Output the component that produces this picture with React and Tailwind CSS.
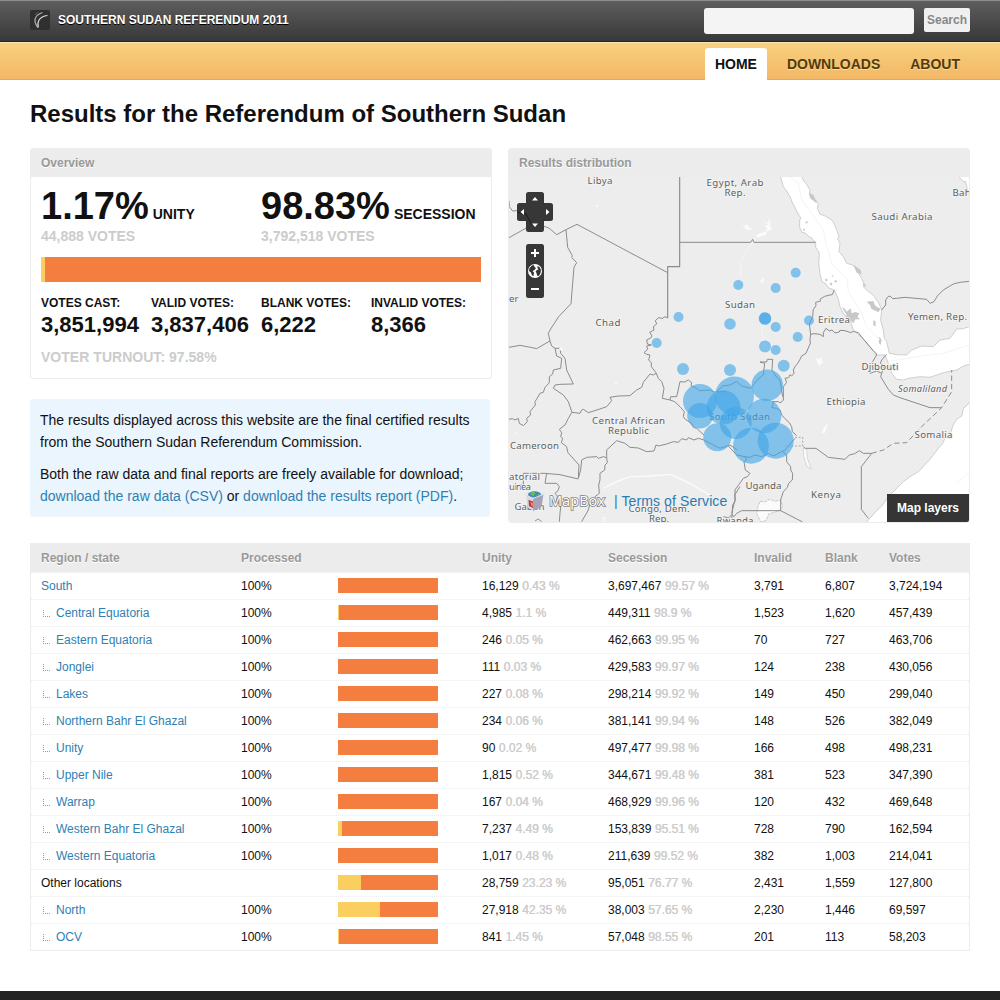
const stats = [
  ['VOTES CAST:', '3,851,994'],
  ['VALID VOTES:', '3,837,406'],
  ['BLANK VOTES:', '6,222'],
  ['INVALID VOTES:', '8,366'],
];

// name, level, processed, unity, unity %, secession, secession %, invalid, blank, votes, bar width of unity
const rows = [
  ['South', 0, '100%', '16,129', '0.43 %', '3,697,467', '99.57 %', '3,791', '6,807', '3,724,194', 0],
  ['Central Equatoria', 1, '100%', '4,985', '1.1 %', '449,311', '98.9 %', '1,523', '1,620', '457,439', 1],
  ['Eastern Equatoria', 1, '100%', '246', '0.05 %', '462,663', '99.95 %', '70', '727', '463,706', 0],
  ['Jonglei', 1, '100%', '111', '0.03 %', '429,583', '99.97 %', '124', '238', '430,056', 0],
  ['Lakes', 1, '100%', '227', '0.08 %', '298,214', '99.92 %', '149', '450', '299,040', 0],
  ['Northern Bahr El Ghazal', 1, '100%', '234', '0.06 %', '381,141', '99.94 %', '148', '526', '382,049', 0],
  ['Unity', 1, '100%', '90', '0.02 %', '497,477', '99.98 %', '166', '498', '498,231', 0],
  ['Upper Nile', 1, '100%', '1,815', '0.52 %', '344,671', '99.48 %', '381', '523', '347,390', 0],
  ['Warrap', 1, '100%', '167', '0.04 %', '468,929', '99.96 %', '120', '432', '469,648', 0],
  ['Western Bahr El Ghazal', 1, '100%', '7,237', '4.49 %', '153,839', '95.51 %', '728', '790', '162,594', 4],
  ['Western Equatoria', 1, '100%', '1,017', '0.48 %', '211,639', '99.52 %', '382', '1,003', '214,041', 0],
  ['Other locations', 0, '', '28,759', '23.23 %', '95,051', '76.77 %', '2,431', '1,559', '127,800', 23],
  ['North', 1, '100%', '27,918', '42.35 %', '38,003', '57.65 %', '2,230', '1,446', '69,597', 42],
  ['OCV', 1, '100%', '841', '1.45 %', '57,048', '98.55 %', '201', '113', '58,203', 1],
];

const cols = 'grid grid-cols-[200px_97px_144px_126px_146px_71px_64px_81px] pl-[10px]';

const circles = [
  [678.5, 317, 5], [738.3, 285, 5], [795.7, 272.7, 5], [775.7, 288, 5], [765, 318.5, 6], [765, 318.5, 6.3],
  [775.7, 327, 5], [730, 324, 5.8], [809, 320.5, 5], [797.7, 337, 5], [656.7, 343, 5], [683, 369, 6],
  [730, 370, 6], [765, 346.4, 6], [775.7, 350, 5], [783.7, 365.7, 6],
  [700, 401, 17], [700, 415.7, 12.8], [717.3, 437.3, 14], [767.3, 385.2, 15.8], [734.5, 396, 19.5],
  [723.5, 407.5, 17], [764, 416, 17.3], [735.7, 423, 16], [751, 445.7, 18], [775.7, 440.7, 18],
];

// text, x (centre), y (baseline), width
const labels = [
  ['Libya', 600, 183.5, 25], ['Egypt, Arab', 735, 185.5, 57], ['Rep.', 735, 195.5, 21], ['Saudi Arabia', 902, 220, 61],
  ['Sudan', 740, 307.5, 30], ['Chad', 608, 326, 25], ['Eritrea', 834, 322.5, 32], ['Yemen, Rep.', 937.5, 319.5, 59],
  ['Djibouti', 880, 369.5, 37], ['Ethiopia', 846, 405, 39], ['Somalia', 933.5, 437.5, 38],
  ['Central African', 628.5, 423.5, 73], ['Republic', 628.5, 433.5, 41], ['Cameroon', 534.5, 448.5, 49],
  ['South Sudan', 739.5, 420, 61], ['Uganda', 763.5, 489, 36], ['Kenya', 826, 497.5, 30], ['Gabon', 529.5, 510, 30],
  ['Congo, Dem.', 659, 512, 61], ['Rep.', 659, 521.5, 20], ['Rwanda', 735, 524, 37],
];

function ResultsMap() {
  return (
    <svg className="block" width="460" height="345" viewBox="509 177 460 345">
      <rect x="509" y="177" width="460" height="345" fill="#ededed" />
      {/* seas */}
      <g transform="translate(730 140) scale(.33333)" fill="#fff" stroke="#c4c4c4" strokeWidth="2.4" strokeLinejoin="round">
        <path d="M150 105L160 140 170 153 180 170 188 190 195 203 206 224 213 235 209 240 209 262 216 277 228 280 236 290 244 293 250 302 257 305 257 322 266 335 268 345 266 370 270 400 275 424 288 432 296 444 313 450 325 478 330 500 340 520 352 533 362 545 370 570 400 597 425 628 440 645 465 645 475 670 485 700 500 718 520 720 535 715 570 710 600 712 640 698 680 690 700 678 717 673 730 670 730 555 700 566 680 567 660 595 630 600 610 620 575 618 545 630 530 645 500 644 478 640 470 605 463 595 460 570 452 540 455 510 447 490 430 465 412 452 400 440 402 430 392 410 385 400 380 385 365 374 350 370 340 350 327 335 330 310 323 295 327 290 322 275 312 250 305 240 285 228 270 222 262 205 265 190 252 178 238 165 240 150 228 130 222 125 213 105Z" />
        <path d="M725 775L712 795 700 805 696 827 680 838 668 857 664 875 645 895 638 910 625 925 600 958 565 995 540 1010 520 1025 480 1065 455 1098 440 1112 410 1146 400 1160 725 1160Z" />
        <path d="M683 105L690 114 700 125 706 124 710 138 714 155 725 150 725 105Z" />
        <g stroke="none" fill="#c8c8c8">
          <path d="M238 158L250 165 256 178 262 185 258 188 250 182 240 174ZM370 374L392 390 395 404 386 400 380 398ZM336 502L345 506 350 515 362 505 365 520 376 516 388 520 382 530 390 538 376 538 370 550 362 542 344 535 350 526ZM410 485L430 483 434 494 440 500 452 506 445 517 432 510 425 508 420 495ZM430 540L437 545 436 560 430 555ZM446 590L455 598 452 615 447 610ZM396 430L408 434 406 442Z" />
          <circle cx="230" cy="247" r="3.500" /><circle cx="289" cy="420" r="3.500" /><circle cx="308" cy="408" r="2.500" /><circle cx="317" cy="424" r="3.500" /><circle cx="303" cy="432" r="3.500" /><circle cx="222" cy="269" r="3" />
        </g>
        <g fill="none" stroke="#f3f3f3" strokeWidth="3">
          <path d="M178 110L205 130 215 180 280 270 288 310 305 370 352 420 355 455 395 520 410 560 450 600" />
          <path d="M475 665L560 650 640 640 717 615" />
          <path d="M680 1030L725 990" />
        </g>
        {/* lakes and rivers */}
        <g stroke="none" fill="#fbfbfb">
          <path d="M36 253L44 258 52 254 56 262 70 268 50 270ZM76 288L90 280 106 276 112 266 104 258 114 254 100 244 114 249 118 234 122 262 125 270 112 272 108 284 86 292ZM88 425L105 410 98 428ZM258 654L268 658 275 652 278 668 266 678ZM275 878L282 862 294 850 284 880ZM336 795L348 796 340 810Z" />
          <path d="M90 1084L104 1086 120 1078 136 1084 152 1080 158 1100 148 1112 116 1122 108 1142 92 1145 80 1120 84 1100Z" stroke="#c8c8c8" strokeWidth="3" strokeDasharray="9 3" />
          <path d="M220 925L230 928 232 955 244 988 230 978 221 948Z" stroke="#c8c8c8" strokeWidth="2" />
        </g>
        <g fill="none" stroke="#f7f7f7" strokeWidth="2.500">
          <path d="M80 290L45 340 32 365 33 410" />
          <path d="M108 540L95 570 102 615 108 650" />
          <path d="M-380 1045L-340 1025-300 1010-240 1008-180 1003-130 1025-60 1065" stroke="#fbfbfb" strokeWidth="4" />
        </g>
        {/* eastern borders */}
        <g fill="none" stroke="#8c8c8c" strokeWidth="3" strokeLinejoin="round">
          <path d="M-151 307H62L68 298 72 307H256" />
          <path d="M455 510L467 495 467 480 474 470 480 468 488 476 500 475 525 472 590 478 600 490 612 485 622 468 640 450 670 432 690 427 717 424" />
          <path d="M313 450L307 464 300 465 284 469 270 478 272 483 257 487 258 497 250 508 248 530 238 552 242 583 240 598 241 610 228 640 215 648 209 660 203 670 195 680 190 690 192 700 185 708 180 704 176 713 165 715 170 727 160 740 160 780 156 785 150 788 145 785 128 785 130 792 125 803 140 805 150 810 156 826 165 836 178 848 185 860 187 875 200 887" />
          <path d="M242 583L252 581 270 583 280 590 280 578 288 565 298 573 306 570 315 579 328 576 330 571 345 572 362 578 370 574 385 578 400 597 430 632 440 642 437 650 425 670 420 700 440 693 455 700 462 680 451 670 455 660 470 643" />
          <path d="M455 700L452 710 475 748 490 765 510 773 600 803 635 803" />
          <path d="M220 920L226 925 258 925 295 952 345 958 358 945 374 941 388 932 400 940 425 940 394 980V1108L415 1135" />
          <path d="M158 935L170 945 170 965 182 980 182 990 188 1000 187 1020 176 1030 172 1042 160 1055 152 1080 152 1112 218 1146" />
          <path d="M-20 1130L-4 1134 5 1124 12 1130 20 1120 35 1112H152" />
          <path d="M45 950L50 960 42 965 46 990 60 1000 52 1010 40 1015 15 1050 15 1080 5 1120" />
          <path d="M-5 918L20 945 45 950 60 952 75 945 95 950 115 940 130 948 165 930 195 895" />
          <path d="M-40 755L-22 738 0 735 20 724 35 738 62 745 80 722 100 704 104 670 90 666 110 666 112 658 128 658 126 690 140 712 150 720 158 770" />
          <path strokeDasharray="16 9" d="M425 940L460 930 490 910 530 908 575 860 635 803 665 755V690" />
          <path strokeDasharray="6 5" stroke="#aaa" d="M195 892H218V918H165" />
        </g>
      </g>
      {/* western borders */}
      <g transform="translate(500 140) scale(.33333)" fill="none" stroke="#8c8c8c" strokeWidth="3" strokeLinejoin="round">
        <path d="M27 183L28 200 38 213 50 212 78 220 95 255 115 256 130 258 148 265 170 284 198 269 231 253 503 398" />
        <path d="M27 293L95 255" />
        <path strokeWidth="3.500" d="M539 105V380H503V534" />
        <path d="M198 269L203 322 217 347 215 352 230 368 222 382 213 491 176 530 152 567 145 580 150 603" />
        <path d="M503 534L495 530 488 535 475 533 466 542 470 552 460 560 462 570 449 577 456 588 452 594 440 600 442 612 454 615 440 618 443 628 432 638 440 643 450 645 446 660 454 668 454 680 468 698 475 715 485 725 492 745 487 775 510 780 524 785 540 800 553 815 550 830 556 838 575 850 580 862 590 865 612 885" />
        <path d="M27 622L60 616 92 622 110 626 150 603 155 618 165 625 180 625 182 640 195 655 200 690 220 732 180 733 165 735 160 745 190 765 205 785 216 817" />
        <path d="M165 625L170 648 185 655 182 685 160 690 158 702 148 710 148 728 135 742 130 757 120 760 112 774 105 785 106 795 90 815 92 825 80 835 82 845 70 857 58 850 55 835 45 840 37 836 27 838" />
        <path d="M216 817L240 820 245 810 250 808 265 818 300 807 320 800 335 782 330 772 355 768 390 767 410 750 425 742 430 727 450 702 460 705 468 700" />
        <path d="M216 817L205 835 195 855 178 868 185 878 182 890 188 895 184 908 200 920 202 930 204 938 237 975 235 1015 242 990 245 960 260 952 290 950 295 955 310 950 320 953 320 930 350 902 375 910 390 922 415 924 440 935 462 933 468 915 475 918 500 912 520 905 535 907 545 896 560 900 565 893 582 900 595 895 612 900 640 915 660 925 690 915 712 930" />
        <path d="M320 953L322 968 315 975 314 990 300 1000 300 1020 296 1035 298 1060 285 1070 285 1085 270 1090 265 1110 245 1145" />
        <path d="M70 1000H135L180 1004 235 1017M70 1000V1035H40M140 1000L135 1030 170 1030 178 1040 174 1052 165 1060 172 1068 170 1080 182 1100 180 1120 178 1145M105 1143L115 1137 125 1145" />
        <path d="M510 780L512 770 530 770 540 725 555 726 565 720 575 728 573 738 590 745 598 752 630 750 640 756 680 755M695 1145L698 1095 706 1082 704 1065 720 1040" />
      </g>
      <g fill="#fafafa"><ellipse cx="561" cy="349" rx="2" ry="1.500" /><circle cx="597" cy="206" r="1" /><circle cx="616" cy="383" r="1" /><path d="M514 434L517 431 516 434ZM540 426l2-1v1.500ZM601 519l2-1v-2h1v2h2v1h-2v3h-1v-3Z" /></g>
      <g fontFamily="'Noto Sans'" fontSize="9.700" fill="#5f5f5f" stroke="#f2f2f2" strokeWidth="2" paintOrder="stroke">
        {labels.map(([t, x, y, w], i) => (
          <text key={i} x={x - w / 2} y={y} textLength={w}>{t}</text>
        ))}
        <text x="952.500" y="196" letterSpacing=".3">Bah</text>
        <text x="509" y="301.500">er</text>
        <text x="509" y="480" textLength="31">atorial</text>
        <text x="509" y="490" textLength="22">uinea</text>
        <text x="898" y="391.500" textLength="49" fontStyle="italic" fontSize="9.200">Somaliland</text>
      </g>
      <g fill="#40a7e8" fillOpacity=".62">
        {circles.map(([x, y, r], i) => <circle key={i} cx={x} cy={y} r={r} />)}
      </g>
      {/* pan and zoom controls */}
      <g fill="#373737">
        <path d="M528.500 192h13a2.500 2.500 0 0 1 2.500 2.500v8.500h6.500a2.500 2.500 0 0 1 2.500 2.500v13a2.500 2.500 0 0 1-2.500 2.500h-6.500v8.500a2.500 2.500 0 0 1-2.500 2.500h-13a2.500 2.500 0 0 1-2.500-2.500v-8.500h-6.500a2.500 2.500 0 0 1-2.500-2.500v-13a2.500 2.500 0 0 1 2.500-2.500h6.500v-8.500a2.500 2.500 0 0 1 2.500-2.500Z" />
        <rect x="526" y="244" width="18" height="54" rx="2.500" />
        <path d="M517 212L526 214 532 225" fill="none" stroke="#1c1c1c" />
      </g>
      <g fill="#fff">
        <path d="M532 200.500L535 197 538 200.500ZM532 223.500L535 227 538 223.500ZM524 209L520.500 212 524 215ZM546 209L549.500 212 546 215Z" />
        <path d="M531 252h3v-3h2v3h3v2h-3v3h-2v-3h-3ZM531 288h8v2h-8Z" />
        <circle cx="535" cy="271" r="7" />
      </g>
      <path fill="#333" d="M529.500 268L532 265.500 534 265 534.500 267 536 268 534.500 270 532.500 271 534 272.500 533.500 276 532 275.500 531 272.500 529 271ZM537.500 266L539.500 267 541 270 540.500 273 539 276 537 275.500 536.500 273 535.500 271.500 537 270 538.500 269.500 537.500 268Z" />
      {/* MapBox box logo */}
      <path d="M526 494L533 498 533 511 527.500 507Z" fill="#d9d6e2" />
      <path d="M533 498L543.500 494 541.500 507 533 511Z" fill="#a6a3b8" />
      <path d="M528.500 500L533 501.500 533 508 529 506Z" fill="#c3352f" />
      <path d="M530 502.500L531.500 503 531.500 505.500M532.300 502.500v4" fill="none" stroke="#f0c8c8" strokeWidth=".6" />
      <ellipse cx="534.500" cy="494.500" rx="6.500" ry="3.300" fill="#3d8fb8" />
      <path d="M530 493L533 491.500 535.500 493 533 496.500ZM536.500 496L540 493 539.500 496Z" fill="#76b947" />
      <path d="M524 495L529 491.500M540 491.500L544.500 494 533 498.500 525 494.500" fill="none" stroke="#e6e5ee" />
      <text x="549" y="506" textLength="56" fontFamily="'Open Sans'" fontSize="14.500" fill="#fff" stroke="#808080" strokeWidth="1.600" paintOrder="stroke">MapBox</text>
    </svg>
  );
}

export default function App() {
  return (
    <div className="flex h-[1000px] w-[1000px] flex-col overflow-hidden bg-white font-['Liberation_Sans',Arial,sans-serif] text-[#111]">
      <header className="flex h-[42px] shrink-0 items-start border-t border-b border-t-[#8c8c8c] border-b-[#222] bg-linear-to-b from-[#5e5e5e] to-[#383838] px-[30px]">
        <div className="mt-[9px] size-5 rounded-[2px] bg-[#303030]">
          <svg width="20" height="20" viewBox="0 0 20 20" fill="none">
            <path d="M8.300 17.500C7 12.500 8.500 6.500 17.500 5.500" stroke="#ddd" strokeWidth="1.100" />
            <path d="M8 17.500C3 11.500 4 5.500 12.500 2.500" stroke="#aaa" strokeWidth="1.300" />
            <path d="M5.500 5C6 3.500 7 2.500 8 1.500" stroke="#666" strokeWidth=".8" />
          </svg>
        </div>
        <div className="ml-2 mt-[10px] text-xs/[18px] font-bold text-white [text-shadow:0_1px_0_#000]">SOUTHERN SUDAN REFERENDUM 2011</div>
        <div className="ml-auto mt-[7px] h-[26px] w-[210px] rounded-[3px] bg-[#f4f4f4]" />
        <button className="ml-[10px] mt-[7px] h-6 w-[46px] rounded-[2px] bg-[#f0f0f0] text-xs font-bold text-[#888]">Search</button>
      </header>
      <nav className="flex h-[38px] shrink-0 justify-end border-t border-b border-t-[#fbe8bb] border-b-[#eda654] bg-linear-to-b from-[#f7d17f] to-[#f3b765] pr-10 text-sm/[32px] font-bold">
        <a className="z-10 mt-[5px] h-8 rounded-t-[3px] bg-white px-[10px] text-[#111]">HOME</a>
        <a className="ml-5 mt-[5px] text-[#523a12] [text-shadow:0_1px_0_#fbe28c]">DOWNLOADS</a>
        <a className="ml-[30px] mt-[5px] text-[#523a12] [text-shadow:0_1px_0_#fbe28c]">ABOUT</a>
      </nav>

      <main className="flex flex-1 flex-col px-[30px]">
        <h1 className="mt-[18px] text-2xl/8 font-bold">Results for the Referendum of Southern Sudan</h1>

        <div className="mt-[18px] flex h-[375px] items-start justify-between">
          <div className="w-[462px]">
            <section className="h-[231px] rounded-[3px] border border-[#ececec]">
              <h2 className="h-7 bg-[#ececec] pl-[10px] text-xs/[28px] font-bold text-[#999] [text-shadow:0_1px_0_#fff]">Overview</h2>
              <div className="flex pl-[10px] pt-[10px]">
                <div className="w-[220px]">
                  <div className="whitespace-nowrap text-[38px]/[38px] font-bold">1.17%<span className="ml-1 text-sm/[14px]">UNITY</span></div>
                  <div className="mt-[2px] text-sm/[18px] font-bold text-[#ccc]">44,888 VOTES</div>
                </div>
                <div>
                  <div className="whitespace-nowrap text-[38px]/[38px] font-bold">98.83%<span className="ml-1 text-sm/[14px]">SECESSION</span></div>
                  <div className="mt-[2px] text-sm/[18px] font-bold text-[#ccc]">3,792,518 VOTES</div>
                </div>
              </div>
              <div className="ml-[10px] mt-3 flex h-[25px] w-[440px] bg-[#f37e3f]"><div className="w-1 bg-[#fbcf5f]" /></div>
              <div className="ml-[10px] mt-3 grid grid-cols-[110px_110px_110px_110px] font-bold">
                {stats.map(([k, v]) => (
                  <div key={k}>
                    <div className="text-xs/[18px]">{k}</div>
                    <div className="pt-px text-[22px]/[24px]">{v}</div>
                  </div>
                ))}
              </div>
              <div className="ml-[10px] mt-[11px] text-sm/[18px] font-bold tracking-[0.03px] text-[#ccc]">VOTER TURNOUT: 97.58%</div>
            </section>
            <section className="mt-5 h-[118px] w-[460px] rounded-[3px] bg-[#eaf5fd] px-[10px] pt-[10px] text-sm/[22px]">
              <p className="whitespace-nowrap">The results displayed across this website are the final certified results<br />from the Southern Sudan Referendum Commission.</p>
              <p className="mt-[10px] whitespace-nowrap">Both the raw data and final reports are freely available for download;<br /><a className="text-[#3080b2]">download the raw data (CSV)</a> or <a className="text-[#3080b2]">download the results report (PDF)</a>.</p>
            </section>
          </div>

          <section className="h-[375px] w-[462px] overflow-hidden rounded-[3px] border border-[#ececec]">
            <h2 className="h-7 bg-[#ececec] pl-[10px] text-xs/[28px] font-bold text-[#999] [text-shadow:0_1px_0_#fff]">Results distribution</h2>
            <div className="relative">
              <ResultsMap />
              <div className="absolute bottom-[10px] left-[105px] text-sm/[22px] tracking-[0.1px] text-[#2a7cb0]">| <a>Terms of Service</a></div>
              <div className="absolute bottom-0 right-0 h-7 w-[82px] bg-[#353535] text-center text-xs/[28px] font-bold text-white">Map layers</div>
            </div>
          </section>
        </div>

        <section className="mt-5 h-[408px] border border-[#ececec] text-xs">
          <div className={cols + ' h-7 bg-[#ececec] leading-[28px] font-bold text-[#999] [text-shadow:0_1px_0_#fff]'}>
            <div>Region / state</div><div>Processed</div><div /><div>Unity</div><div>Secession</div><div>Invalid</div><div>Blank</div><div>Votes</div>
          </div>
          {rows.map((r) => (
            <div key={r[0]} className={cols + ' h-[27px] border-t border-dotted border-[#ececec] leading-[26px]'}>
              <div className="flex items-center">
                {r[1] === 1 && (
                  <svg className="ml-[2px] mr-[5px] mt-[2px]" width="8" height="8" viewBox="0 0 8 8" fill="none" stroke="#999">
                    <path strokeDasharray="1 1" d="M.5 0V7M2 6.500H8" />
                  </svg>
                )}
                <a className={r[0] === 'Other locations' ? '' : 'text-[#3080b2]'}>{r[0]}</a>
              </div>
              <div>{r[2]}</div>
              <div className="mt-[5px] flex h-[15px] w-[100px] bg-[#f37e3f]"><div className="bg-[#fbcf5f]" style={{ width: r[10] }} /></div>
              <div>{r[3]} <span className="text-[#ccc] [text-shadow:0.4px_0_0_#ccc]">{r[4]}</span></div>
              <div>{r[5]} <span className="text-[#ccc] [text-shadow:0.4px_0_0_#ccc]">{r[6]}</span></div>
              <div>{r[7]}</div>
              <div>{r[8]}</div>
              <div>{r[9]}</div>
            </div>
          ))}
        </section>
      </main>
      <footer className="h-[9px] shrink-0 bg-[#222]" />
    </div>
  );
}
